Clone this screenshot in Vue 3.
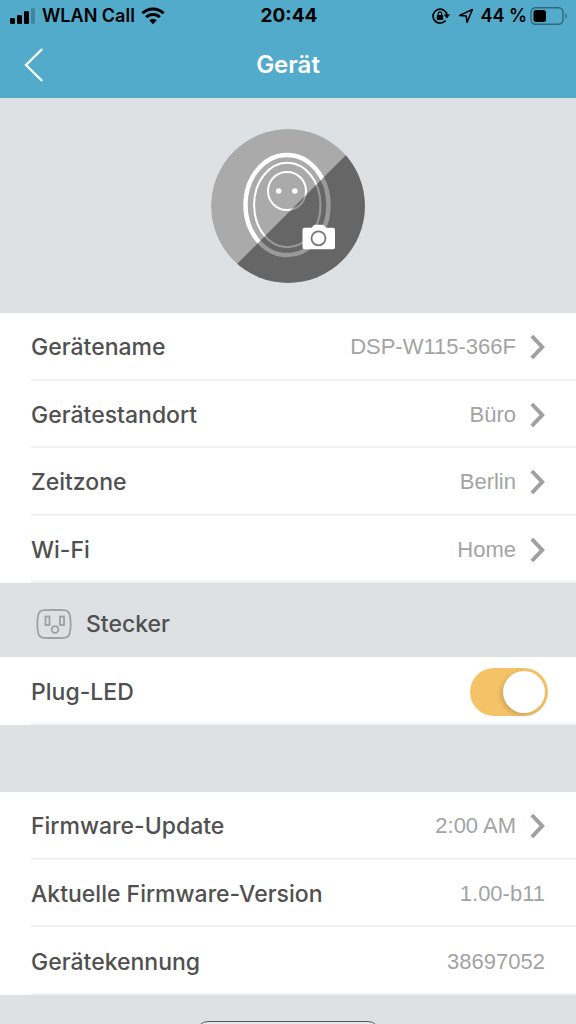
<script setup>
import { ref } from 'vue'

const plugLed = ref(true)

const deviceRows = [
  { label: 'Gerätename', value: 'DSP-W115-366F' },
  { label: 'Gerätestandort', value: 'Büro' },
  { label: 'Zeitzone', value: 'Berlin' },
  { label: 'Wi-Fi', value: 'Home' },
]

const infoRows = [
  { label: 'Firmware-Update', value: '2:00 AM', link: true },
  { label: 'Aktuelle Firmware-Version', value: '1.00-b11' },
  { label: 'Gerätekennung', value: '38697052' },
]
</script>

<template>
  <div class="page">
    <header class="top">
      <div class="status">
        <div class="status-left">
          <svg width="26" height="18" viewBox="0 0 26 18" aria-hidden="true">
            <rect x="0" y="11" width="5" height="6" rx="1.3" />
            <rect x="7" y="8" width="5" height="9" rx="1.3" />
            <rect x="14" y="4" width="5" height="13" rx="1.3" />
            <rect x="21" y="1" width="4" height="16" rx="1.3" opacity="0.22" />
          </svg>
          <span class="carrier">WLAN Call</span>
          <svg width="24" height="18" viewBox="0 0 24 18" aria-hidden="true">
            <g fill="none" stroke="#000" stroke-width="3">
              <path d="M1.4 6.3a15 15 0 0 1 21.2 0" />
              <path d="M5.2 10.2a9.6 9.6 0 0 1 13.6 0" />
            </g>
            <path d="M8.2 13.2a5.4 5.4 0 0 1 7.6 0L12 17.2z" />
          </svg>
        </div>
        <time class="clock">20:44</time>
        <div class="status-right">
          <svg width="18" height="18" viewBox="0 0 18 18" aria-hidden="true">
            <path d="M13.6 13.4A7 7 0 1 1 15 8" fill="none" stroke="#000" stroke-width="1.7" />
            <path d="M11.8 7.4h6.200l-3.100 4.200z" />
            <rect x="4.800" y="8" width="6.400" height="5" rx="0.8" />
            <path d="M6.300 8.200V6.500a1.700 1.700 0 0 1 3.400 0V8.200" fill="none" stroke="#000" stroke-width="1.2" />
          </svg>
          <svg class="arrow" width="16" height="16" viewBox="0 0 16 16" aria-hidden="true">
            <path d="M1.6 7.4L14.4 1.5 9 14.4 8.2 8z" fill="none" stroke="#000" stroke-width="1.5" stroke-linejoin="round" />
          </svg>
          <span class="percent">44 %</span>
          <svg width="38" height="18" viewBox="0 0 38 18" aria-hidden="true">
            <rect x="1" y="0.7" width="32" height="16.6" rx="4.5" fill="none" stroke="#000" stroke-opacity="0.4" stroke-width="1.4" />
            <rect x="3.500" y="3" width="12.500" height="12" rx="2.5" />
            <path d="M35.4 6.2c2 .8 2 4.8 0 5.6z" opacity="0.4" />
          </svg>
        </div>
      </div>
      <div class="nav">
        <button class="back" type="button" aria-label="Zurück">
          <svg width="20" height="34" viewBox="0 0 20 34" aria-hidden="true">
            <path d="M18.2 1L2 17l16.2 16" fill="none" stroke="#fff" stroke-width="2.3" />
          </svg>
        </button>
        <h1 class="title">Gerät</h1>
      </div>
    </header>

    <main>
      <div class="hero">
        <button class="photo" type="button" aria-label="Foto ändern">
          <svg width="154" height="154" viewBox="0 0 154 154" aria-hidden="true">
            <circle cx="77" cy="77" r="77" fill="#aaa" />
            <g fill="none" stroke="#fff">
              <ellipse cx="76" cy="76" rx="41.5" ry="50" stroke-width="4.4" />
              <ellipse cx="76.3" cy="76" rx="33.2" ry="42.2" stroke-width="2" />
              <circle cx="76" cy="62" r="19" stroke-width="2" />
            </g>
            <circle cx="67.7" cy="62" r="2.8" fill="#fff" />
            <circle cx="83.8" cy="62" r="2.8" fill="#fff" />
            <path class="shade" d="M161 0V161H0z" />
            <path d="M93.5 98.8h7l2-2.2q.7-.8 2-.8h6.5q1.3 0 2 .8l2 2.2h7q2 0 2 2v17.4q0 2-2 2h-28.5q-2 0-2-2v-17.4q0-2 2-2z" fill="#fff" />
            <circle cx="107.5" cy="109.3" r="7" fill="none" stroke="#777" stroke-width="1.8" />
          </svg>
        </button>
      </div>

      <ul class="group four">
        <li v-for="row in deviceRows" :key="row.label" class="item">
          <button class="row" type="button">
            <span class="label">{{ row.label }}</span>
            <span class="value">{{ row.value }}</span>
            <svg width="15" height="26" viewBox="0 0 15 26" aria-hidden="true">
              <path d="M1.8 2L12.2 13 1.8 24" class="chevron" />
            </svg>
          </button>
        </li>
      </ul>

      <h2 class="section">
        <svg width="36" height="30" viewBox="0 0 36 30" aria-hidden="true">
          <g fill="none" stroke="#a0a0a0" stroke-width="1.8">
            <path d="M8 1.2Q18 .8 28 1.2C31.500 1.400 33 2.800 33.800 6Q35.600 15 33.800 24C33 27.200 31.500 28.600 28 28.800Q18 29.200 8 28.800C4.500 28.600 3 27.200 2.200 24Q.4 15 2.200 6C3 2.800 4.500 1.400 8 1.200z" />
            <rect x="9.500" y="7.500" width="4" height="8.500" />
            <rect x="24" y="7.500" width="4" height="8.500" />
            <circle cx="19" cy="20.500" r="3.400" />
          </g>
        </svg>
        Stecker
      </h2>

      <div class="group one">
        <div class="item">
          <div class="row toggle-row">
            <label class="label" for="plug-led">Plug-LED</label>
            <input id="plug-led" v-model="plugLed" class="switch" type="checkbox" role="switch" />
          </div>
        </div>
      </div>

      <ul class="group three">
        <li v-for="row in infoRows" :key="row.label" class="item">
          <component :is="row.link ? 'button' : 'div'" class="row" :type="row.link ? 'button' : null">
            <span class="label">{{ row.label }}</span>
            <span class="value">{{ row.value }}</span>
            <svg v-if="row.link" width="15" height="26" viewBox="0 0 15 26" aria-hidden="true">
              <path d="M1.8 2L12.2 13 1.8 24" class="chevron" />
            </svg>
          </component>
        </li>
      </ul>

      <div class="footer">
        <button class="remove" type="button" aria-label="Gerät entfernen"></button>
      </div>
    </main>
  </div>
</template>

<style>
body {
  background: #dde1e4;
}
</style>

<style scoped>
.page {
  height: 100vh;
  overflow: hidden;
  background: #dde1e4;
  color: #505050;
  font-family: Inter, "Liberation Sans", sans-serif;
}

button {
  padding: 0;
  border: 0;
  background: none;
  color: inherit;
  font: inherit;
  cursor: pointer;
}

svg {
  display: block;
  flex: none;
}

.top {
  background: #53abcb;
}

.status {
  display: grid;
  grid-template-columns: 1fr auto 1fr;
  align-items: center;
  height: 32px;
  padding: 0 8px 0 10px;
  color: #000;
  font-size: 18px;
  font-weight: 600;
  line-height: 24px;
}

.status-left,
.status-right {
  display: flex;
  align-items: center;
}

.status-left {
  gap: 6px;
}

.status-right {
  justify-content: flex-end;
  gap: 3px;
}

.arrow {
  margin: 0 3px 0 5px;
}

.carrier,
.percent {
  white-space: nowrap;
}

.clock {
  font-size: 19px;
  font-weight: 700;
}

.nav {
  display: grid;
  grid-template-columns: 1fr auto 1fr;
  align-items: center;
  height: 66px;
  padding: 0 24px;
}

.back {
  justify-self: start;
}

.title {
  margin: 0;
  color: #fff;
  font-size: 24px;
  font-weight: 600;
  line-height: 32px;
}

.hero {
  display: flex;
  justify-content: center;
  padding: 31px 0 30px;
}

.photo {
  overflow: hidden;
  border-radius: 50%;
}

.shade {
  fill: #000;
  fill-opacity: 0.4;
}

.group {
  display: grid;
  grid-auto-rows: 1fr;
  margin: 0;
  padding: 0 0 0 31px;
  background: #fff;
  list-style: none;
}

.four {
  min-height: 270px;
}

.one {
  min-height: 68px;
  margin-bottom: 67px;
}

.three {
  min-height: 203px;
}

.item {
  display: flex;
  border-bottom: 2px solid #f1f2f3;
}

.row {
  display: flex;
  flex: 1;
  align-items: center;
  padding: 3px 31px 0 0;
  text-align: left;
}

.label {
  flex: 1;
  font-size: 23px;
  font-weight: 500;
  line-height: 28px;
}

.value {
  color: #a3a3a3;
  font-family: "Liberation Sans", Arial, sans-serif;
  font-size: 22px;
  line-height: 28px;
}

.value + svg {
  margin-left: 14px;
}

.chevron {
  fill: none;
  stroke: #a0a0a0;
  stroke-width: 4;
}

.section {
  display: flex;
  align-items: center;
  gap: 14px;
  min-height: 67px;
  margin: 0;
  padding: 7px 0 0 36px;
  font-size: 23px;
  font-weight: 500;
  line-height: 28px;
}

.toggle-row {
  padding-right: 28px;
}

.switch {
  display: flex;
  align-items: center;
  box-sizing: border-box;
  width: 78px;
  height: 48px;
  margin: 0;
  padding: 3px;
  border-radius: 24px;
  background: #d5d8da;
  appearance: none;
  cursor: pointer;
}

.switch::before {
  content: "";
  width: 42px;
  height: 42px;
  border-radius: 50%;
  background: #fff;
  box-shadow: -2px 2px 5px rgba(0, 0, 0, 0.16);
}

.switch:checked {
  justify-content: flex-end;
  background: #f4c368;
}

.footer {
  display: flex;
  justify-content: center;
  padding: 26px 0;
}

.remove {
  width: 184px;
  height: 60px;
  border: 1px solid #555;
  border-radius: 12px;
  background: #e6e8ea;
}
</style>
